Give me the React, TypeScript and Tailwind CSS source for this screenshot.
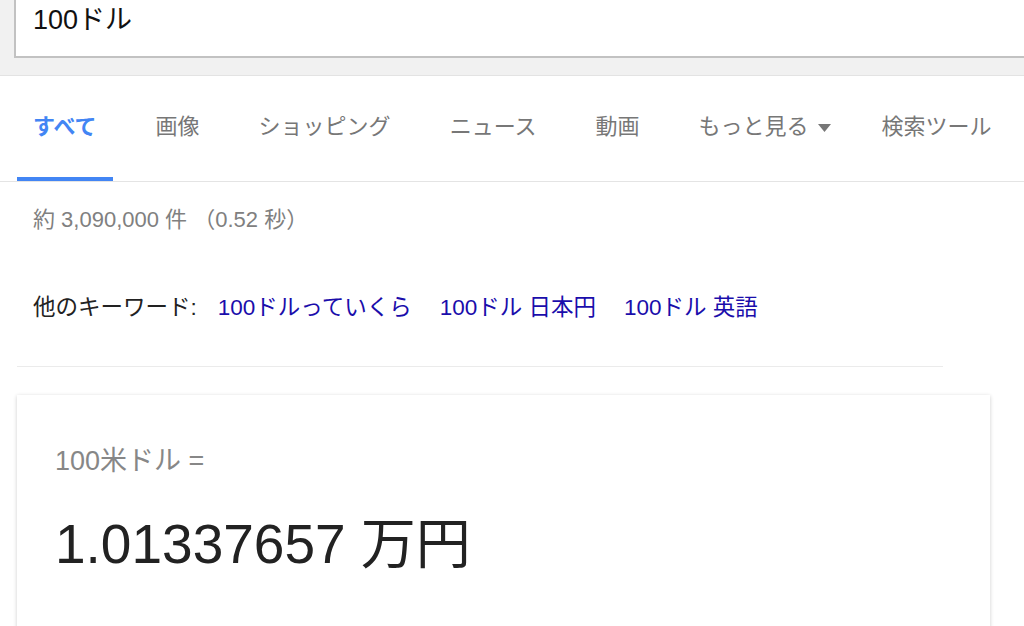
const tabs = [
  { label: "すべて", active: true },
  { label: "画像" },
  { label: "ショッピング" },
  { label: "ニュース" },
  { label: "動画" },
  { label: "もっと見る", menu: true },
  { label: "検索ツール" },
]

const related = ["100ドルっていくら", "100ドル 日本円", "100ドル 英語"]

export default function App() {
  return (
    <div
      className="min-h-screen bg-white overflow-hidden"
      style={{ fontFamily: '"Liberation Sans", Arial, "Noto Sans CJK JP", sans-serif' }}
    >
      {/* search header */}
      <div className="h-[76px] bg-[#f1f1f1] border-b border-[#e3e3e3]">
        <div className="ml-[14px] h-[58px] bg-white border-l-2 border-b-2 border-[#c2c2c2] pl-[17px] leading-[40px] text-[27px] text-[#111]">
          100ドル
        </div>
      </div>

      {/* tabs */}
      <div className="h-[106px] border-b border-[#e4e4e4] pl-[17px] flex gap-[27px]">
        {tabs.map((t) => (
          <div
            key={t.label}
            className={
              "h-full flex items-center border-b-4 text-[22px] " +
              (t.active
                ? "px-4 border-[#4285f4] text-[#4285f4] font-bold"
                : t.menu
                ? "pl-4 pr-2 border-transparent text-[#777]"
                : "px-4 border-transparent text-[#777]")
            }
          >
            {t.label}
            {t.menu && (
              <svg className="ml-[9px] mt-[2px]" width="13" height="8" viewBox="0 0 13 8">
                <path d="M0 0 H13 L6.5 8 Z" fill="#777" />
              </svg>
            )}
          </div>
        ))}
      </div>

      {/* body */}
      <div className="pl-[17px] w-[943px]">
        <div className="pl-4 pt-[23px] leading-[30px] text-[22px] text-[#808080]">
          約 3,090,000 件 （0.52 秒）
        </div>

        <div className="pl-4 mt-[58px] leading-[30px] text-[22.5px] flex">
          <span className="text-[#222]">他のキーワード:</span>
          {related.map((r, i) => (
            <a
              key={r}
              href="#"
              className={"text-[#1a0dab] " + (i === 0 ? "ml-[21px]" : "ml-[28px]")}
            >
              {r}
            </a>
          ))}
        </div>

        <div className="mt-[43px] h-px bg-[#ebebeb]" />
      </div>

      {/* converter card */}
      <div className="ml-[17px] mt-[28px] w-[973px] bg-white shadow-[0_1px_4px_rgba(0,0,0,0.2)] pl-[38px] pt-[49px] pb-[60px]">
        <div className="leading-[34px] text-[27px] text-[#878787]">100米ドル =</div>
        <div className="mt-[34px] leading-[64px] text-[55px] text-[#222]">1.01337657 万円</div>
      </div>
    </div>
  )
}
